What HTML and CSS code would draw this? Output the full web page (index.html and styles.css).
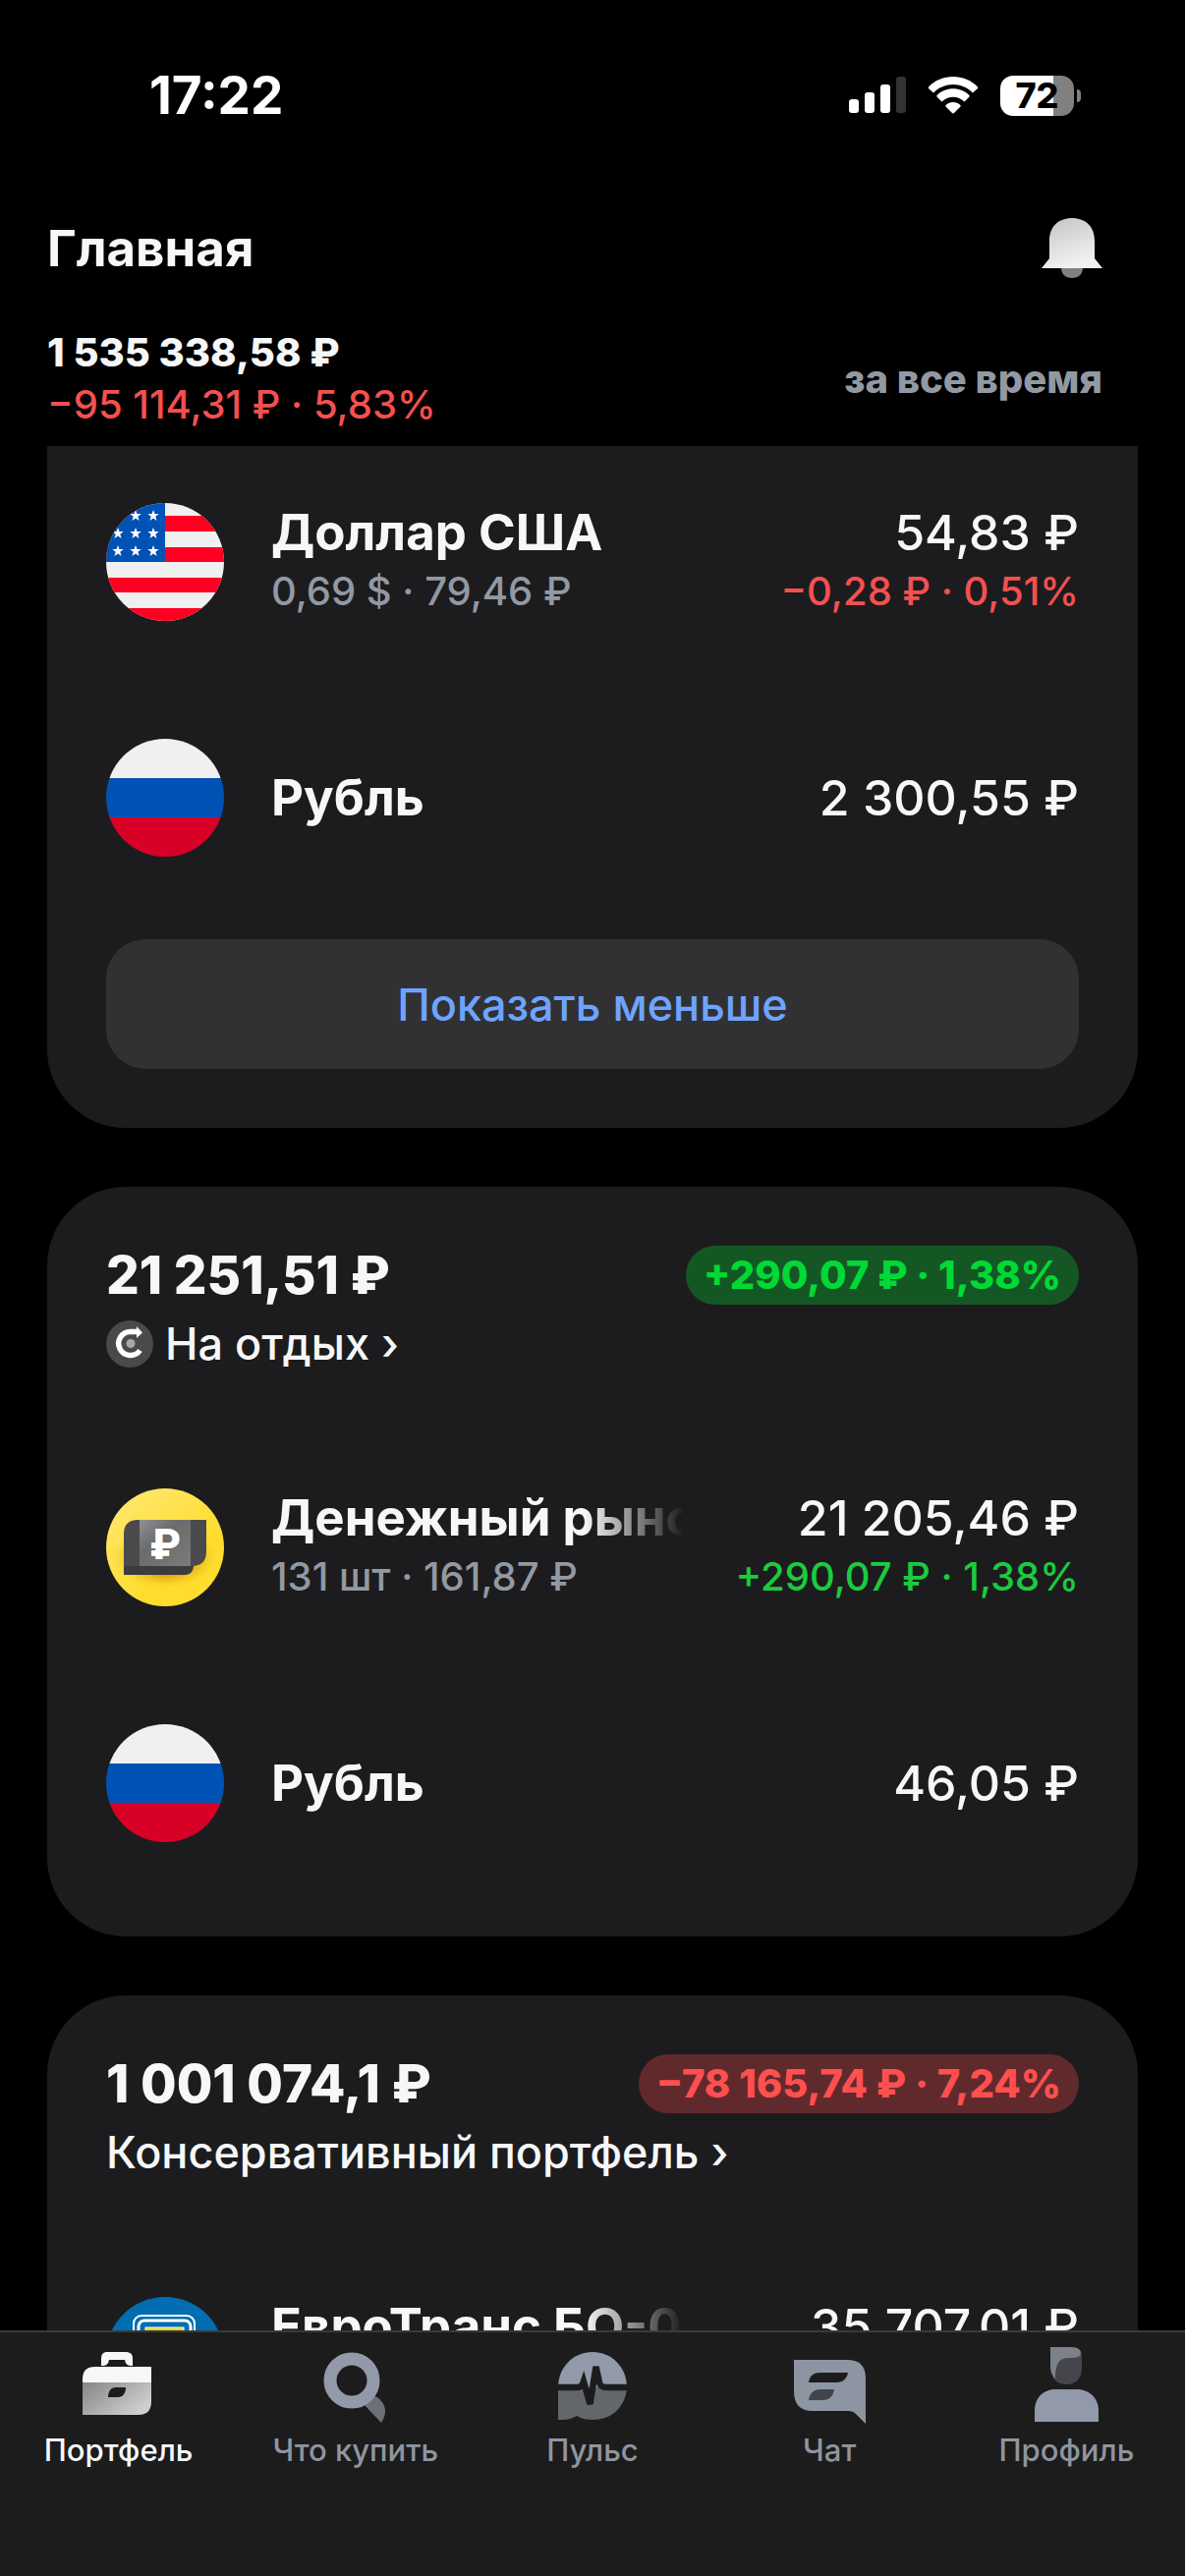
FILE: index.html
```html
<!DOCTYPE html>
<html lang="ru">
<head>
    <meta charset="UTF-8">
    <meta name="viewport" content="width=device-width, initial-scale=1.0">
    <title>Главная - Портфель</title>
    <link rel="stylesheet" href="styles.css">
</head>
<body>

<div class="app">
    <div class="status-bar">
        <span class="clock">17:22</span>
        <div class="status-icons">
            <svg class="signal" viewBox="0 0 58 38">
                <rect x="0" y="23" width="10" height="14" rx="3" fill="#fff"/>
                <rect x="16" y="16" width="10" height="21" rx="3" fill="#fff"/>
                <rect x="32" y="8" width="10" height="29" rx="3" fill="#fff"/>
                <rect x="48" y="0" width="10" height="37" rx="3" fill="#333"/>
            </svg>
            <svg class="wifi" viewBox="0 0 52 38" fill="#fff">
                <path d="M1 10.500C14 -3.500 38 -3.500 51 10.500C51.500 11.500 51 12 50.500 12.500L46 16.500C35 5 17 5 6 16.500L1.500 12.500C1 12 0.500 11.500 1 10.500Z"/>
                <path d="M9.500 19C18 10 34 10 42.500 19C43 20 42.500 20.500 42 21L37.500 25.500C31 19 21 19 14.500 25.500L10 21C9.500 20.500 9 20 9.500 19Z"/>
                <path d="M18.500 29C22.500 25 29.500 25 33.500 29C34 30 33.500 30.500 33 31L27 37C26.500 37.500 25.500 37.500 25 37L19 31C18.500 30.500 18 30 18.500 29Z"/>
            </svg>
            <div class="battery"><span>72</span></div>
        </div>
    </div>

    <header class="header">
        <div class="header-row">
            <h1>Главная</h1>
            <button class="bell" type="button" aria-label="Уведомления">
                <svg viewBox="0 0 62 62">
                    <defs>
                        <linearGradient id="bell-fill" x1="0" y1="0" x2="0.400" y2="1">
                            <stop offset="0" stop-color="#c4c4c6"/>
                            <stop offset="1" stop-color="#f2f2f4"/>
                        </linearGradient>
                    </defs>
                    <path d="M20 50H42C42 57 38 61 31 61S20 57 20 50Z" fill="#808080"/>
                    <path d="M8 23C8 9 17 0 31 0S54 9 54 23V41L62 51H0L8 41Z" fill="url(#bell-fill)"/>
                </svg>
            </button>
        </div>
        <div class="header-row">
            <div class="summary">
                <p class="summary-total">1 535 338,58 ₽</p>
                <p class="summary-change red">−95 114,31 ₽ · 5,83%</p>
            </div>
            <button class="period" type="button">за все время</button>
        </div>
    </header>

    <main class="content">
        <!-- Currencies -->
        <section class="card card-scrolled">
            <div class="asset">
                <svg class="asset-icon" viewBox="0 0 120 120">
                    <defs>
                        <clipPath id="round"><circle cx="60" cy="60" r="60"/></clipPath>
                        <path id="star" d="M0 -6L1.500 -2H5.700L2.300 0.700L3.600 5L0 2.500L-3.600 5L-2.300 0.700L-5.700 -2H-1.500Z" fill="#fff"/>
                    </defs>
                    <g clip-path="url(#round)">
                        <rect width="120" height="120" fill="#f0f0f0"/>
                        <path d="M0 13H120V29H0ZM0 45H120V60H0ZM0 76H120V91H0ZM0 107H120V120H0Z" fill="#ff0023"/>
                        <rect width="60" height="60" fill="#0052b4"/>
                        <use href="#star" x="30" y="13"/><use href="#star" x="48" y="13"/>
                        <use href="#star" x="12" y="31"/><use href="#star" x="30" y="31"/><use href="#star" x="48" y="31"/>
                        <use href="#star" x="12" y="49"/><use href="#star" x="30" y="49"/><use href="#star" x="48" y="49"/>
                    </g>
                </svg>
                <div class="asset-info">
                    <h3>Доллар США</h3>
                    <p>0,69 $ · 79,46 ₽</p>
                </div>
                <div class="asset-value">
                    <strong>54,83 ₽</strong>
                    <p class="red">−0,28 ₽ · 0,51%</p>
                </div>
            </div>
            <div class="asset">
                <div class="asset-icon flag-ru"></div>
                <div class="asset-info">
                    <h3>Рубль</h3>
                </div>
                <div class="asset-value">
                    <strong>2 300,55 ₽</strong>
                </div>
            </div>
            <button class="show-less" type="button">Показать меньше</button>
        </section>

        <!-- Vacation account -->
        <section class="card">
            <div class="card-top">
                <h2>21 251,51 ₽</h2>
                <span class="pill pill-green">+290,07 ₽ · 1,38%</span>
            </div>
            <a href="#" class="card-link">
                <svg class="card-link-icon" viewBox="0 0 48 48">
                    <circle cx="24" cy="24" r="24" fill="#4a4a4c"/>
                    <path d="M34.500 30.500A12 12 0 1 1 25 11.500H32" fill="none" stroke="#fff" stroke-width="5.500"/>
                    <path d="M31 6L37 12.500L31 18Z" fill="#fff"/>
                    <circle cx="25" cy="23.500" r="4.500" fill="#a8a8aa"/>
                </svg>
                На отдых ›
            </a>
            <div class="asset-list">
                <div class="asset">
                    <svg class="asset-icon" viewBox="0 0 120 120">
                        <defs>
                            <linearGradient id="yellow" x1="0" y1="0" x2="0.600" y2="0.700">
                                <stop offset="0" stop-color="#ffe878"/>
                                <stop offset="1" stop-color="#ffdd2d"/>
                            </linearGradient>
                            <linearGradient id="note" x1="0" y1="0" x2="1" y2="1">
                                <stop offset="0" stop-color="#919191"/>
                                <stop offset="0.400" stop-color="#6b6b6b"/>
                                <stop offset="1" stop-color="#7c7c7c"/>
                            </linearGradient>
                            <radialGradient id="note-shadow">
                                <stop offset="0.500" stop-color="#d99a12"/>
                                <stop offset="1" stop-color="#ffdd2d" stop-opacity="0"/>
                            </radialGradient>
                        </defs>
                        <circle cx="60" cy="60" r="60" fill="url(#yellow)"/>
                        <ellipse cx="60" cy="70" rx="56" ry="34" fill="url(#note-shadow)"/>
                        <path d="M18 48V88H80C86 88 89 84 89 78V48Z" fill="#3c3c3e"/>
                        <path d="M32 32H102V64C102 74 97 79 87 79H18V46C18 37 23 32 32 32Z" fill="#4a4a4c"/>
                        <rect x="34" y="32" width="52" height="47" fill="url(#note)"/>
                        <text x="60" y="72" class="note-sign">₽</text>
                    </svg>
                    <div class="asset-info">
                        <h3 class="faded">Денежный рынок</h3>
                        <p>131 шт · 161,87 ₽</p>
                    </div>
                    <div class="asset-value">
                        <strong>21 205,46 ₽</strong>
                        <p class="green">+290,07 ₽ · 1,38%</p>
                    </div>
                </div>
                <div class="asset">
                    <div class="asset-icon flag-ru"></div>
                    <div class="asset-info">
                        <h3>Рубль</h3>
                    </div>
                    <div class="asset-value">
                        <strong>46,05 ₽</strong>
                    </div>
                </div>
            </div>
        </section>

        <!-- Conservative portfolio -->
        <section class="card">
            <div class="card-top">
                <h2>1 001 074,1 ₽</h2>
                <span class="pill pill-red">−78 165,74 ₽ · 7,24%</span>
            </div>
            <a href="#" class="card-link">Консервативный портфель ›</a>
            <div class="asset-list">
                <div class="asset asset-top">
                    <svg class="asset-icon" viewBox="0 0 120 120">
                        <circle cx="60" cy="60" r="60" fill="#006eb0"/>
                        <rect x="28" y="19" width="62" height="80" rx="8" fill="none" stroke="#fff" stroke-width="2"/>
                        <rect x="33" y="24" width="53" height="70" rx="6" fill="none" stroke="#fff" stroke-width="3"/>
                        <rect x="40" y="31" width="39" height="50" fill="#e6d72c" stroke="#fff" stroke-width="1"/>
                    </svg>
                    <div class="asset-info">
                        <h3 class="faded">ЕвроТранс БО-001Р</h3>
                    </div>
                    <div class="asset-value">
                        <strong>35 707,01 ₽</strong>
                    </div>
                </div>
            </div>
        </section>
    </main>

    <nav class="tab-bar">
        <a href="#" class="tab active">
            <svg viewBox="0 0 84 84">
                <defs>
                    <linearGradient id="case-fill" x1="0" y1="0" x2="1" y2="0.600">
                        <stop offset="0" stop-color="#858587"/>
                        <stop offset="1" stop-color="#cfcfd1"/>
                    </linearGradient>
                </defs>
                <path d="M24 25V21C24 16 26 14 30 14H49C53 14 56 16 56 20V28C50 28 49 26 48 22H32C31 26 30 28 24 28Z" fill="#f6f7f8"/>
                <path d="M5 45V42C5 33 9 29 18 29H75V46H5Z" fill="#f6f7f8"/>
                <path d="M5 45H75V64C75 73 71 78 62 78H5Z" fill="url(#case-fill)"/>
                <path d="M31 60C31 54 34 50 39 50H49C49 56 46 60 41 60Z" fill="#1c1c1d"/>
            </svg>
            <span>Портфель</span>
        </a>
        <a href="#" class="tab">
            <svg viewBox="0 0 84 84">
                <path d="M50 67L62 59C71 64 76 74 68 86Z" fill="#6c7078"/>
                <circle cx="38" cy="43" r="22" fill="none" stroke="#9299a8" stroke-width="13"/>
            </svg>
            <span>Что купить</span>
        </a>
        <a href="#" class="tab">
            <svg viewBox="0 0 84 84">
                <path d="M7 50C7 29 23 14 42 14S77 29 77 50Z" fill="#9299a8"/>
                <path d="M7 50H77C76 69 62 83 43 83C36 83 31 82 26 79C20 83 14 83 7 83Z" fill="#63666b"/>
                <path d="M6 50H27C31 50 32 47 33 44L39.500 67L45.500 29L49 45C50 49 52 50 56 50H78" fill="none" stroke="#1c1c1d" stroke-width="6.500"/>
            </svg>
            <span>Пульс</span>
        </a>
        <a href="#" class="tab">
            <svg viewBox="0 0 84 84">
                <path d="M6 22H60C73 22 79 28 79 41V87L69 77C66 74 63 74 60 74H25C12 74 6 67 6 54Z" fill="#8d94a2"/>
                <path d="M21 45C22 38 26 35 33 35H61C60 41 56 45 49 45Z" fill="#1c1c1d"/>
                <path d="M21 63C22 56 26 52 33 52H47C46 59 42 63 35 63Z" fill="#42454b"/>
            </svg>
            <span>Чат</span>
        </a>
        <a href="#" class="tab">
            <svg viewBox="0 0 84 84">
                <path d="M26 9H47C54 9 58 12 58 18V30C58 41 52 47 42 47S26 41 26 27Z" fill="#44464b"/>
                <path d="M26 9H47C54 9 57 12 57 15C57 19 53 20 45 20C34 20 31 27 31 41C27 37 26 32 26 27Z" fill="#7c818c"/>
                <path d="M10 85V74C10 60 19 52 32 52H52C65 52 75 60 75 74V85Z" fill="#9299a8"/>
            </svg>
            <span>Профиль</span>
        </a>
    </nav>
</div>

</body>
</html>
```
FILE: styles.css
```css
* {
    margin: 0;
    padding: 0;
    box-sizing: border-box;
}

body {
    font-family: Inter, "Liberation Sans", sans-serif;
    background-color: #000;
    color: #f6f7f8;
}

button {
    border: none;
    background: none;
    font-family: inherit;
    cursor: pointer;
}

a {
    color: inherit;
    text-decoration: none;
}

.app {
    height: 100vh;
    display: flex;
    flex-direction: column;
}

/* Status bar */
.status-bar {
    display: flex;
    justify-content: space-between;
    align-items: center;
    padding: 66px 113px 0 152px;
}

.clock {
    font-size: 53px;
    line-height: 62px;
    font-weight: 700;
    color: #fff;
}

.status-icons {
    display: flex;
    align-items: center;
    gap: 22px;
}

.signal {
    width: 58px;
    height: 38px;
}

.wifi {
    width: 52px;
    height: 38px;
}

.battery {
    position: relative;
    width: 75px;
    height: 41px;
    border-radius: 13px;
    background: linear-gradient(90deg, #fff 72%, #808080 72%);
    color: #000;
    font-size: 36px;
    line-height: 41px;
    font-weight: 800;
    text-align: center;
}

/* Battery tip */
.battery::after {
    content: "";
    position: absolute;
    right: -7px;
    top: 14px;
    width: 4px;
    height: 13px;
    border-radius: 0 6px 6px 0;
    background-color: #808080;
}

/* Header */
.header {
    padding: 94px 84px 16px 48px;
}

.header-row {
    display: flex;
    justify-content: space-between;
    align-items: center;
}

.header h1 {
    font-size: 51px;
    line-height: 62px;
    font-weight: 700;
}

.bell svg {
    display: block;
    width: 62px;
    height: 62px;
}

.summary {
    padding-top: 48px;
}

.summary p {
    font-size: 40px;
    line-height: 53px;
}

.summary .summary-total {
    font-weight: 800;
}

.summary .summary-change {
    font-weight: 500;
}

.period {
    padding-top: 48px;
    font-size: 40px;
    line-height: 53px;
    font-weight: 800;
    color: #9299a2;
}

/* Cards */
.content {
    flex: 1;
    min-height: 0;
    overflow-y: auto;
    scrollbar-width: none;
    padding: 0 48px;
}

.card {
    margin-bottom: 60px;
    padding: 60px;
    border-radius: 80px;
    background-color: #1c1c1e;
}

.card-scrolled {
    padding-top: 0;
    border-radius: 0 0 80px 80px;
}

.card-top {
    display: flex;
    justify-content: space-between;
    align-items: center;
}

.card-top h2 {
    font-size: 53px;
    line-height: 60px;
    font-weight: 800;
}

.pill {
    padding: 0 18px;
    border-radius: 30px;
    font-size: 40px;
    line-height: 60px;
    font-weight: 800;
}

.pill-green {
    background-color: #155724;
    color: #00d936;
}

.pill-red {
    background-color: #602a2d;
    color: #ff4f4f;
}

.card-link {
    display: flex;
    align-items: center;
    gap: 12px;
    padding-top: 12px;
    font-size: 45px;
    line-height: 55px;
    font-weight: 500;
}

.card-link-icon {
    width: 48px;
    height: 48px;
}

.asset-list {
    padding-top: 60px;
    margin-bottom: -24px;
}

.asset {
    display: flex;
    align-items: center;
    gap: 48px;
    height: 240px;
}

.card-scrolled .asset:first-child {
    height: 236px;
    margin-bottom: 2px;
}

/* Row under the tab bar: lines start level with the icon */
.asset-top {
    align-items: flex-start;
    padding-top: 60px;
}

.asset-icon {
    flex: none;
    width: 120px;
    height: 120px;
}

.flag-ru {
    border-radius: 50%;
    background: linear-gradient(#f0f0f0 33%, #0052b4 33% 67%, #d80027 67%);
}

.note-sign {
    font-size: 42px;
    font-weight: 800;
    text-anchor: middle;
    fill: #fff;
}

.asset-info {
    flex: 1;
    min-width: 0;
}

.asset-info h3 {
    font-size: 51px;
    line-height: 60px;
    font-weight: 700;
    white-space: nowrap;
}

.asset-info .faded {
    max-width: 420px;
    overflow: hidden;
    -webkit-mask-image: linear-gradient(90deg, #000 76%, transparent);
    mask-image: linear-gradient(90deg, #000 76%, transparent);
}

.asset-value {
    text-align: right;
    white-space: nowrap;
}

.asset-value strong {
    display: block;
    font-size: 50px;
    line-height: 60px;
    font-weight: 500;
}

.asset p {
    font-size: 40px;
    line-height: 60px;
    font-weight: 500;
    color: #9299a2;
}

.asset .green {
    color: #1bcb3f;
}

.red,
.asset .red {
    color: #f55050;
}

.show-less {
    width: 100%;
    height: 132px;
    margin-top: 24px;
    border-radius: 40px;
    background-color: #313133;
    color: #6ea4ff;
    font-size: 45px;
    font-weight: 500;
}

/* Tab bar */
.tab-bar {
    display: flex;
    height: 250px;
    border-top: 2px solid #3a3a3b;
    background-color: #1c1c1d;
}

.tab {
    flex: 1;
    display: flex;
    flex-direction: column;
    align-items: center;
    padding-top: 6px;
    font-size: 31px;
    line-height: 36px;
    font-weight: 500;
    color: #8f959f;
}

.tab svg {
    width: 84px;
    height: 84px;
    margin-bottom: 12px;
    overflow: visible;
}

.tab.active {
    color: #f6f7f8;
}
```
